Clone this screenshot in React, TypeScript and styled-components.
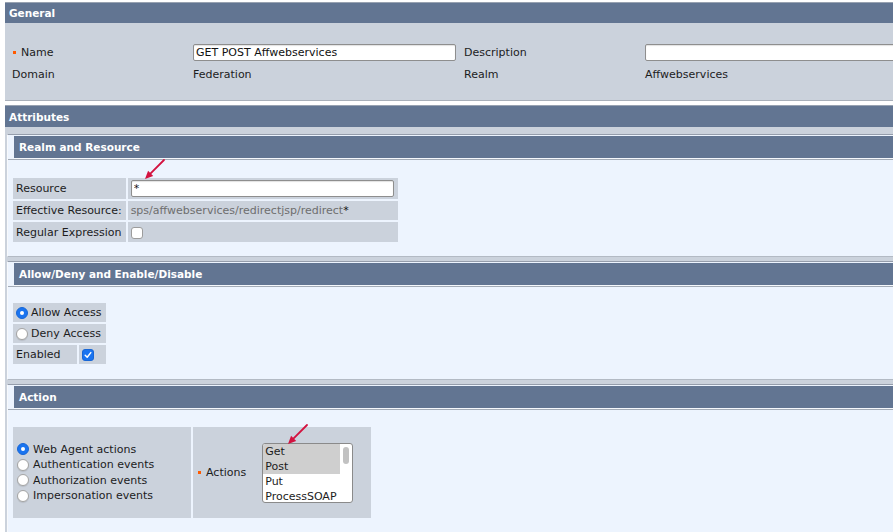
import styled, { createGlobalStyle } from "styled-components";

const GlobalStyle = createGlobalStyle`
  html, body {
    margin: 0;
    padding: 0;
    background: #fff;
    overflow: hidden;
  }
  body {
    font-family: "DejaVu Sans", Verdana, sans-serif;
    font-size: 11px;
    color: #1c1c1c;
  }
`;

const Page = styled.div`
  width: 960px;
  padding: 2px 0 0 5px;
`;

const SectionHeader = styled.div<{ $h: number }>`
  height: ${p => p.$h}px;
  border-top: 1px solid #98a2b1;
  background: #627592;
  color: #fff;
  font-weight: bold;
  font-size: 10.5px;
  display: flex;
  align-items: center;
  padding-left: 4px;
`;

const GeneralGrid = styled.div`
  display: grid;
  grid-template-columns: 181px 271px 181px 271px;
  grid-auto-rows: 22px;
  align-items: center;
  background: #cbd2dc;
  padding: 18px 0 15px 7px;
  border-bottom: 1px solid #a9b0ba;
  margin-bottom: 4px;
`;

const Label = styled.span`
  display: flex;
  align-items: center;
  white-space: nowrap;
`;

const Req = styled.span`
  display: inline-block;
  width: 3px;
  height: 3px;
  background: #ff5a00;
  margin: 0 5px 0 1px;
  flex: none;
`;

const TextInput = styled.input`
  box-sizing: border-box;
  width: 263px;
  height: 17px;
  border: 1px solid #8e8e8e;
  border-radius: 2px;
  box-shadow: inset 0 1px 1px rgba(0, 0, 0, 0.12);
  padding: 0 2px;
  font-family: inherit;
  font-size: 11px;
  color: #111;
  background: #fff;
  outline: none;
`;

const AttrBody = styled.div`
  background: #cbd2dc;
  padding: 7px 0 0 2px;
`;

const Panel = styled.section`
  background: #edf4fe;
  border-top: 1px solid #959dab;
  border-left: 1px solid #f7f9fc;
  border-bottom: 1px solid #b3bac4;
  padding-top: 1px;
  margin-bottom: 4px;
`;

const PanelHeader = styled.div`
  margin-left: 6px;
  height: 22px;
  background: #627592;
  color: #fff;
  font-weight: bold;
  font-size: 10.5px;
  display: flex;
  align-items: center;
  padding-left: 5px;
  border-bottom: 1px solid #f5f8fc;
`;

const PanelBody = styled.div<{ $top: number; $bottom: number }>`
  border-top: 1px solid #a3abb6;
  padding: ${p => p.$top}px 0 ${p => p.$bottom}px 3px;
`;

const FieldTable = styled.table`
  border-collapse: separate;
  border-spacing: 2px;
`;

const Cell = styled.td<{ $h?: number; $w?: number }>`
  background: #cbd2dc;
  padding: 0 4px 0 3px;
  height: ${p => p.$h ?? 19}px;
  ${p => (p.$w ? `width: ${p.$w}px;` : "")}
  white-space: nowrap;
  vertical-align: middle;
  box-sizing: border-box;
`;

const Muted = styled.span`
  color: #6e6e6e;
`;

const Star = styled.span`
  color: #111;
`;

const Anchor = styled.div`
  position: relative;
  display: inline-block;
  vertical-align: middle;
`;

const ArrowSvg = styled.svg<{ $left: number; $top: number }>`
  position: absolute;
  left: ${p => p.$left}px;
  top: ${p => p.$top}px;
  width: 26px;
  height: 24px;
  pointer-events: none;
`;

const RadioDot = styled.span<{ $on?: boolean }>`
  box-sizing: border-box;
  width: 12px;
  height: 12px;
  border-radius: 50%;
  flex: none;
  display: inline-flex;
  align-items: center;
  justify-content: center;
  background: ${p => (p.$on ? "#1a74f0" : "#fff")};
  border: 1px solid ${p => (p.$on ? "#1766d6" : "#a4a4a4")};
  box-shadow: ${p => (p.$on ? "none" : "0 1px 1px rgba(0,0,0,0.1)")};
  &::after {
    content: "";
    width: 4px;
    height: 4px;
    border-radius: 50%;
    background: ${p => (p.$on ? "#fff" : "transparent")};
  }
`;

const CheckBox = styled.span<{ $on?: boolean }>`
  box-sizing: border-box;
  width: 12px;
  height: 12px;
  border-radius: 3px;
  display: inline-flex;
  align-items: center;
  justify-content: center;
  vertical-align: middle;
  background: ${p => (p.$on ? "#1a74f0" : "#fff")};
  border: 1px solid ${p => (p.$on ? "#1766d6" : "#9c9c9c")};
`;

const Option = styled.div<{ $gap: number; $h?: number }>`
  display: flex;
  align-items: center;
  gap: ${p => p.$gap}px;
  ${p => (p.$h ? `height: ${p.$h}px;` : "")}
  white-space: nowrap;
`;

const ActionCell = styled.td<{ $w: number }>`
  background: #cbd2dc;
  width: ${p => p.$w}px;
  height: 91px;
  box-sizing: border-box;
  padding: 0 0 0 4px;
  vertical-align: middle;
`;

const ActionsField = styled.div`
  display: flex;
  align-items: center;
`;

const ListBox = styled.div`
  box-sizing: border-box;
  margin-left: 16px;
  width: 91px;
  height: 60px;
  border: 1px solid #8a8a8a;
  border-radius: 3px;
  background: #fff;
  display: flex;
  overflow: hidden;
`;

const ListItems = styled.div`
  flex: 1;
`;

const ListItem = styled.div<{ $sel?: boolean }>`
  height: 15px;
  line-height: 15px;
  padding-left: 2px;
  background: ${p => (p.$sel ? "#cfcfcf" : "transparent")};
  white-space: nowrap;
`;

const ScrollTrack = styled.div`
  width: 12px;
  display: flex;
  justify-content: center;
`;

const ScrollThumb = styled.div`
  width: 6px;
  height: 17px;
  margin-top: 3px;
  border-radius: 3px;
  background: #c2c2c2;
`;

function Arrow({ left, top }: { left: number; top: number }) {
  return (
    <ArrowSvg $left={left} $top={top} viewBox="0 0 26 24">
      <line x1="22" y1="2" x2="8.4" y2="15.6" stroke="#d3123f" strokeWidth="1.8" strokeLinecap="round" />
      <polygon points="3,21 11.2,17.9 6.1,12.8" fill="#d3123f" />
    </ArrowSvg>
  );
}

function Check() {
  return (
    <svg width="8" height="8" viewBox="0 0 8 8">
      <path d="M1.2 4.2 L3.2 6.2 L6.8 1.6" fill="none" stroke="#fff" strokeWidth="1.5" strokeLinecap="round" strokeLinejoin="round" />
    </svg>
  );
}

export default function App() {
  return (
    <>
      <GlobalStyle />
      <Page>
        <SectionHeader $h={20}>General</SectionHeader>
        <GeneralGrid>
          <Label>
            <Req />
            Name
          </Label>
          <div>
            <TextInput defaultValue="GET POST Affwebservices" />
          </div>
          <Label>Description</Label>
          <div>
            <TextInput defaultValue="" />
          </div>
          <Label>Domain</Label>
          <Label>Federation</Label>
          <Label>Realm</Label>
          <Label>Affwebservices</Label>
        </GeneralGrid>

        <SectionHeader $h={21}>Attributes</SectionHeader>
        <AttrBody>
          <Panel>
            <PanelHeader>Realm and Resource</PanelHeader>
            <PanelBody $top={16} $bottom={12}>
              <FieldTable>
                <tbody>
                  <tr>
                    <Cell $h={21}>Resource</Cell>
                    <Cell $h={21} $w={268}>
                      <Anchor>
                        <TextInput defaultValue="*" />
                        <Arrow left={11} top={-22} />
                      </Anchor>
                    </Cell>
                  </tr>
                  <tr>
                    <Cell>Effective Resource:</Cell>
                    <Cell>
                      <Muted>sps/affwebservices/redirectjsp/redirect</Muted>
                      <Star>*</Star>
                    </Cell>
                  </tr>
                  <tr>
                    <Cell $h={20}>Regular Expression</Cell>
                    <Cell $h={20}>
                      <CheckBox />
                    </Cell>
                  </tr>
                </tbody>
              </FieldTable>
            </PanelBody>
          </Panel>

          <Panel>
            <PanelHeader>Allow/Deny and Enable/Disable</PanelHeader>
            <PanelBody $top={14} $bottom={13}>
              <FieldTable>
                <tbody>
                  <tr>
                    <Cell colSpan={2}>
                      <Option $gap={3}>
                        <RadioDot $on />
                        Allow Access
                      </Option>
                    </Cell>
                  </tr>
                  <tr>
                    <Cell colSpan={2}>
                      <Option $gap={3}>
                        <RadioDot />
                        Deny Access
                      </Option>
                    </Cell>
                  </tr>
                  <tr>
                    <Cell $w={64}>Enabled</Cell>
                    <Cell>
                      <CheckBox $on>
                        <Check />
                      </CheckBox>
                    </Cell>
                  </tr>
                </tbody>
              </FieldTable>
            </PanelBody>
          </Panel>

          <Panel>
            <PanelHeader>Action</PanelHeader>
            <PanelBody $top={15} $bottom={40}>
              <FieldTable>
                <tbody>
                  <tr>
                    <ActionCell $w={178}>
                      <Option $gap={4} $h={15.5}>
                        <RadioDot $on />
                        Web Agent actions
                      </Option>
                      <Option $gap={4} $h={15.5}>
                        <RadioDot />
                        Authentication events
                      </Option>
                      <Option $gap={4} $h={15.5}>
                        <RadioDot />
                        Authorization events
                      </Option>
                      <Option $gap={4} $h={15.5}>
                        <RadioDot />
                        Impersonation events
                      </Option>
                    </ActionCell>
                    <ActionCell $w={178}>
                      <ActionsField>
                        <Req />
                        Actions
                        <Anchor>
                          <ListBox>
                            <ListItems>
                              <ListItem $sel>Get</ListItem>
                              <ListItem $sel>Post</ListItem>
                              <ListItem>Put</ListItem>
                              <ListItem>ProcessSOAP</ListItem>
                            </ListItems>
                            <ScrollTrack>
                              <ScrollThumb />
                            </ScrollTrack>
                          </ListBox>
                          <Arrow left={39} top={-20} />
                        </Anchor>
                      </ActionsField>
                    </ActionCell>
                  </tr>
                </tbody>
              </FieldTable>
            </PanelBody>
          </Panel>
        </AttrBody>
      </Page>
    </>
  );
}
